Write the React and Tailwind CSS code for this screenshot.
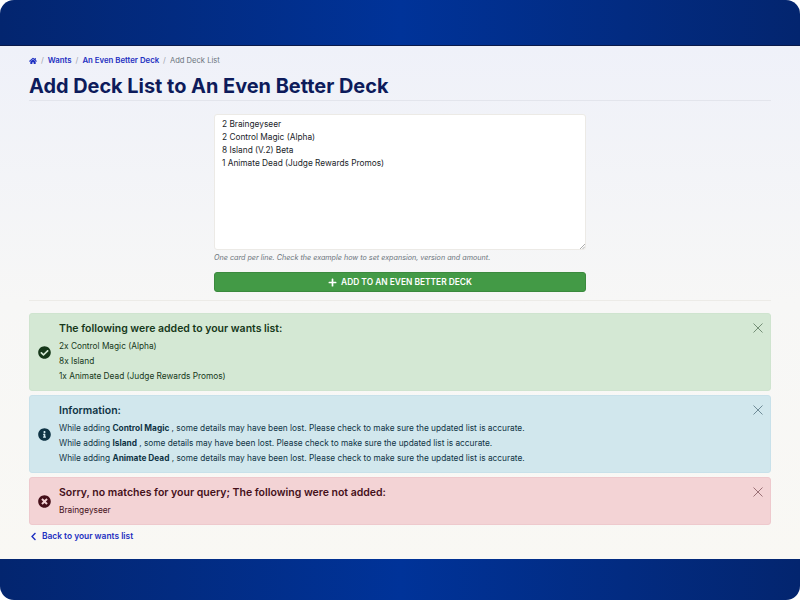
import React from "react";
import { FaHome, FaPlus, FaChevronLeft, FaCheckCircle, FaInfoCircle, FaTimesCircle } from "react-icons/fa";

const font = "font-['Inter','Liberation_Sans',sans-serif]";

const Alert = ({ Icon, title, tone, children }) => {
    return (
        <div className={`relative flex items-center rounded-[3px] border pl-[8px] pr-10 ${tone}`}>
            <div className="w-[21px] shrink-0">
                <Icon className="h-[13px] w-[13px]" />
            </div>
            <div className="pt-[6px] pb-[6px]">
                <h4 className="text-[10.5px] leading-[18px] font-semibold">{title}</h4>
                <div className="mt-[1px] text-[8.3px] leading-[15px]">{children}</div>
            </div>
            <svg viewBox="0 0 10 10" className="absolute top-[9px] right-[7px] h-[10px] w-[10px] opacity-50" fill="none" stroke="currentColor" strokeWidth="1">
                <path d="M0.5 0.5 9.5 9.5M9.5 0.5 0.5 9.5" />
            </svg>
        </div>
    );
};

const App = () => {
    return (
        <div className={`flex h-[600px] w-[800px] flex-col overflow-hidden bg-white text-[#212529] ${font}`}>
            {/* top bar */}
            <div className="h-[46px] shrink-0 rounded-tl-[14px] rounded-tr-[14px] border-b border-[#0a1a4a] bg-gradient-to-r from-[#03256f] via-[#003399] to-[#03256f]" />

            {/* main */}
            <main className="flex-1 bg-gradient-to-b from-[#eff1f9] via-[#f7f7f6] to-[#f9f8f4] px-[29px] pt-[10px]">
                <nav className="flex h-[10px] items-center gap-[4px] text-[7.8px] text-[#1d2fc1]">
                    <FaHome className="h-[8px] w-[8px]" />
                    <span className="text-[#a0a4ad]">/</span>
                    <span className="font-semibold">Wants</span>
                    <span className="text-[#a0a4ad]">/</span>
                    <span className="font-semibold">An Even Better Deck</span>
                    <span className="text-[#a0a4ad]">/</span>
                    <span className="text-[7.6px] text-[#6c757d]">Add Deck List</span>
                </nav>
                <h1 className="mt-[6px] border-b border-[#e3e5ec] text-[19.9px] leading-[28px] font-bold text-[#0d1b5b]">
                    Add Deck List to An Even Better Deck
                </h1>

                <div className="mx-auto mt-[13px] w-[372px]">
                    <div className="relative">
                        <textarea
                            readOnly
                            className="block h-[136px] w-full resize-none rounded-[3px] border border-[#eceae6] bg-white px-[7px] py-[3px] text-[8.3px] leading-[13px] text-[#212529] outline-none"
                            value={"2 Braingeyseer\n2 Control Magic (Alpha)\n8 Island (V.2) Beta\n1 Animate Dead (Judge Rewards Promos)"}
                        />
                        <svg viewBox="0 0 5 5" className="absolute right-[1px] bottom-[1px] h-[5px] w-[5px]" fill="none" stroke="#8a8a8a" strokeWidth="0.7">
                            <path d="M0 5 5 0M2.5 5 5 2.5" />
                        </svg>
                    </div>
                    <p className="mt-[2px] text-[7.2px] leading-[11px] text-[#6c757d] italic">
                        One card per line. Check the example how to set expansion, version and amount.
                    </p>
                    <button className="mt-[9px] flex h-[20px] w-full items-center justify-center gap-[4px] rounded-[3px] border border-[#3b8a3e] bg-[#439a46] text-[8.4px] font-semibold text-white">
                        <FaPlus className="h-[9px] w-[9px]" />
                        ADD TO AN EVEN BETTER DECK
                    </button>
                </div>

                <hr className="mt-[8px] border-[#ecebe7]" />

                <div className="mt-[12px] flex flex-col gap-[4px]">
                    <Alert
                        Icon={FaCheckCircle}
                        title="The following were added to your wants list:"
                        tone="border-[#cfe4cf] bg-[#d4e8d4] text-[#16381a]"
                    >
                        <p>2x Control Magic (Alpha)</p>
                        <p>8x Island</p>
                        <p>1x Animate Dead (Judge Rewards Promos)</p>
                    </Alert>
                    <Alert
                        Icon={FaInfoCircle}
                        title="Information:"
                        tone="border-[#c8e1ea] bg-[#d1e7ed] text-[#0f3445]"
                    >
                        <p>While adding <strong>Control Magic</strong> , some details may have been lost. Please check to make sure the updated list is accurate.</p>
                        <p>While adding <strong>Island</strong> , some details may have been lost. Please check to make sure the updated list is accurate.</p>
                        <p>While adding <strong>Animate Dead</strong> , some details may have been lost. Please check to make sure the updated list is accurate.</p>
                    </Alert>
                    <Alert
                        Icon={FaTimesCircle}
                        title="Sorry, no matches for your query; The following were not added:"
                        tone="border-[#eec9cd] bg-[#f3d3d5] text-[#45101a]"
                    >
                        <p>Braingeyseer</p>
                    </Alert>
                </div>

                <a className="mt-[4px] flex h-[14px] items-center gap-[4px] text-[8.4px] font-semibold text-[#1d2fc1]">
                    <FaChevronLeft className="h-[9px] w-[9px]" />
                    Back to your wants list
                </a>
            </main>

            {/* bottom bar */}
            <div className="h-[41px] shrink-0 rounded-bl-[14px] rounded-br-[14px] bg-gradient-to-r from-[#03256f] via-[#003399] to-[#03256f]" />
        </div>
    );
};

export default App;
